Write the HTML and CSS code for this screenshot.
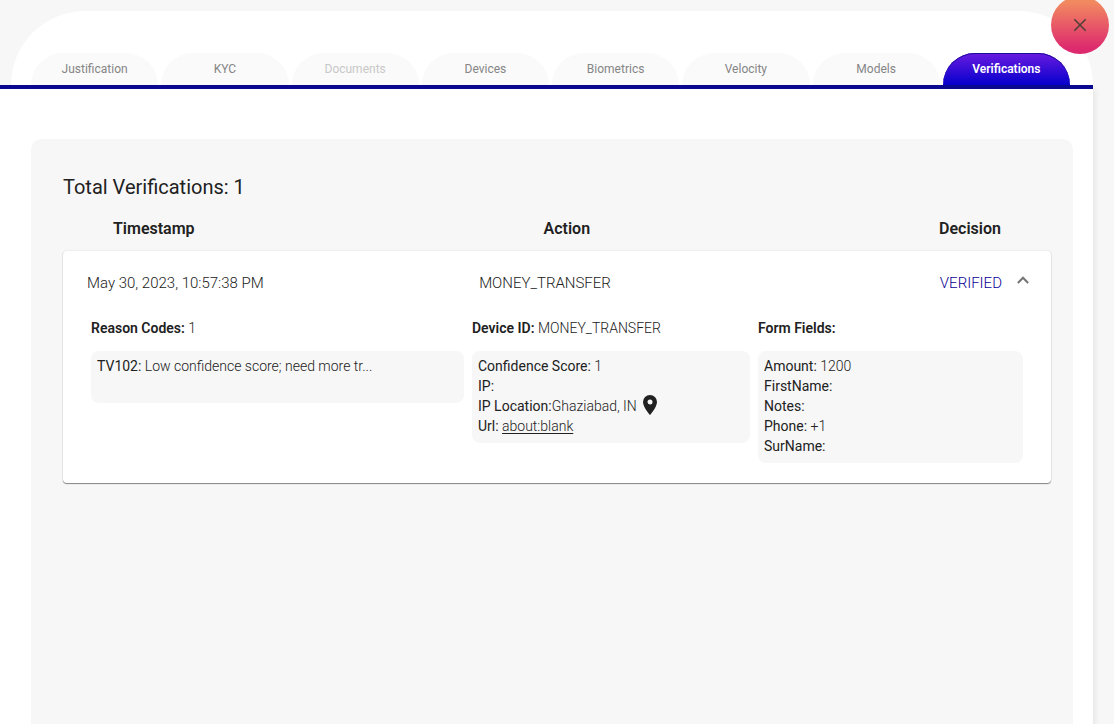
FILE: index.html
```html
<!DOCTYPE html>
<html lang="en">
<head>
<meta charset="utf-8">
<title>Verifications</title>
<link rel="stylesheet" href="styles.css">
</head>
<body>
<div class="dialog">
  <button class="close" type="button" aria-label="Close">
    <svg width="14" height="14" viewBox="0 0 14 14" fill="none" stroke="#4f4038" stroke-width="1.6"><path d="M1.3 1.3 12.7 12.7M12.7 1.3 1.3 12.7"/></svg>
  </button>
  <header class="top">
    <nav class="tabs" role="tablist">
      <button class="tab" role="tab" type="button">Justification</button>
      <button class="tab" role="tab" type="button">KYC</button>
      <button class="tab" role="tab" type="button" disabled>Documents</button>
      <button class="tab" role="tab" type="button">Devices</button>
      <button class="tab" role="tab" type="button">Biometrics</button>
      <button class="tab" role="tab" type="button">Velocity</button>
      <button class="tab" role="tab" type="button">Models</button>
      <button class="tab active" role="tab" type="button" aria-selected="true">Verifications</button>
    </nav>
  </header>
  <main class="body">
    <section class="panel">
      <h1 class="title">Total Verifications: 1</h1>
      <div class="heads">
        <span>Timestamp</span><span>Action</span><span>Decision</span>
      </div>
      <article class="card">
        <button class="summary" type="button" aria-expanded="true">
          <span class="fields">
            <span>May 30, 2023, 10:57:38 PM</span>
            <span>MONEY_TRANSFER</span>
            <span class="decision">VERIFIED</span>
          </span>
          <svg class="chevron" width="12" height="8" viewBox="0 0 12 8" fill="none" stroke="#757575" stroke-width="2"><path d="M.9 7 6 1.8 11.1 7"/></svg>
        </button>
        <div class="details">
          <section>
            <h2 class="label">Reason Codes: <span>1</span></h2>
            <div class="box reasons">
              <p><b>TV102:</b> Low confidence score; need more tr...</p>
            </div>
          </section>
          <section>
            <h2 class="label">Device ID: <span>MONEY_TRANSFER</span></h2>
            <div class="box">
              <p><b>Confidence Score:</b> 1</p>
              <p><b>IP:</b></p>
              <p class="location"><span><b>IP Location:</b>Ghaziabad, IN</span>
                <svg class="pin" width="14" height="20" viewBox="0 0 14 20" fill="#212121"><path fill-rule="evenodd" d="M7 0a7 7 0 0 0-7 7c0 5.200 7 13 7 13s7-7.800 7-13a7 7 0 0 0-7-7Zm0 4.500a2.500 2.500 0 1 1 0 5 2.500 2.500 0 0 1 0-5Z"/></svg>
              </p>
              <p><b>Url:</b> <a href="about:blank">about:blank</a></p>
            </div>
          </section>
          <section>
            <h2 class="label">Form Fields:</h2>
            <div class="box">
              <p><b>Amount:</b> 1200</p>
              <p><b>FirstName:</b></p>
              <p><b>Notes:</b></p>
              <p><b>Phone:</b> +1</p>
              <p><b>SurName:</b></p>
            </div>
          </section>
        </div>
      </article>
    </section>
  </main>
</div>
</body>
</html>
```
FILE: styles.css
```css
* { box-sizing: border-box; }
body {
  margin: 0;
  background: #f7f7f7;
  color: #212121;
  font-family: Roboto, "Liberation Sans", sans-serif;
}
h1, h2, p { margin: 0; }
button { border: 0; padding: 0; font: inherit; color: inherit; cursor: pointer; }

.dialog {
  position: relative;
  display: flex;
  flex-direction: column;
  min-height: 100vh;
  margin-right: 21px;
  padding-top: 11px;
}
.close {
  position: absolute;
  top: -4px;
  right: -16px;
  display: flex;
  align-items: center;
  justify-content: center;
  width: 58px;
  height: 58px;
  border-radius: 50%;
  background: linear-gradient(#f28a60 10%, #dd2a6e 90%);
}

.top {
  margin-left: 11px;
  padding: 42px 20px 0;
  background: #fff;
  border-radius: 76px 76px 0 0;
}
.tabs {
  display: grid;
  grid-template-columns: repeat(8, 1fr);
  gap: 3px;
  padding-right: 3px;
}
.tab {
  height: 32px;
  border-radius: 32px 32px 0 0;
  background: #fafafa;
  color: #858585;
  font-size: 12px;
  line-height: 32px;
}
.tab:disabled { color: #c8c8c8; cursor: default; }
.tab.active {
  background: linear-gradient(#6a1be0, #0500cc);
  box-shadow: inset 0 1px 0 #1c0a9c;
  color: #fff;
  font-weight: 600;
}

.body {
  flex: 1;
  display: flex;
  padding: 50px 20px 0 31px;
  border-top: 4px solid #09098f;
  background: #fff;
  box-shadow: 2px 4px 6px rgba(0, 0, 0, .08);
}
.panel {
  flex: 1;
  padding: 36px 22px 0 32px;
  border-radius: 10px 10px 0 0;
  background: #f7f7f7;
}
.title { font-size: 20px; font-weight: 400; line-height: 24px; }
.heads {
  display: flex;
  justify-content: space-between;
  padding: 20px 50px 12px;
  font-size: 16px;
  font-weight: 600;
  line-height: 20px;
}

.card {
  border-radius: 4px;
  background: #fff;
  box-shadow: 0 1px 1px rgba(0, 0, 0, .45), 0 0 2px rgba(0, 0, 0, .12);
}
.summary {
  display: flex;
  align-items: center;
  gap: 15px;
  width: 100%;
  height: 64px;
  padding: 0 22px 0 24px;
  background: none;
  font-size: 15px;
  font-weight: 300;
  text-align: left;
}
.fields { flex: 1; display: grid; grid-template-columns: 3fr 3fr 1fr; }
.decision { color: #0a0096; text-align: right; }
.chevron { margin-bottom: 6px; }

.details {
  display: grid;
  grid-template-columns: 373fr 278fr 265fr;
  align-items: start;
  gap: 8px;
  padding: 3px 28px 20px;
  font-size: 14px;
  font-weight: 300;
  line-height: 20px;
}
.label { margin-bottom: 13px; font-size: 14px; font-weight: 600; line-height: 20px; }
.label span { font-weight: 300; }
.box { padding: 5px 6px 7px; border-radius: 8px; background: #f7f7f7; }
.box b { font-weight: 400; }
.box a { color: inherit; text-underline-offset: 2px; }
.reasons { min-height: 52px; }
.location { display: flex; align-items: center; gap: 6px; height: 20px; }
.pin { margin-bottom: 2px; }
```
